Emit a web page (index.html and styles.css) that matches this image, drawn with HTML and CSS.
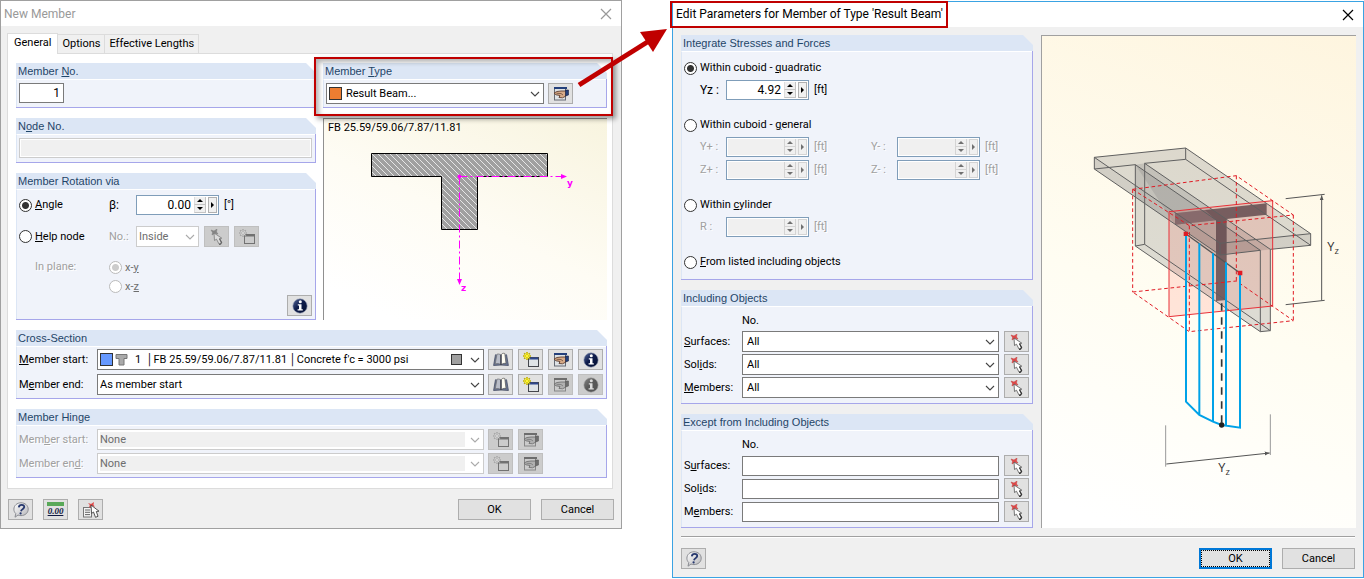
FILE: index.html
```
<!DOCTYPE html>
<html lang="en">
<head>
<meta charset="utf-8">
<title>New Member</title>
<link rel="stylesheet" href="styles.css">
</head>
<body>
<svg class="defs" aria-hidden="true">
  <defs>
    <linearGradient id="orb" x1="0" y1="0" x2="1" y2="1"><stop offset="0" stop-color="#5b6c9c"/><stop offset=".45" stop-color="#0e1c4c"/><stop offset="1" stop-color="#05102f"/></linearGradient>
    <linearGradient id="bubble" x1="0" y1="0" x2="1" y2="1"><stop offset="0" stop-color="#ffffff"/><stop offset="1" stop-color="#b4b4b8"/></linearGradient>
    <linearGradient id="pane" x1="0" y1="0" x2="1" y2="1"><stop offset="0" stop-color="#ffffff"/><stop offset="1" stop-color="#b9c4d6"/></linearGradient>
    <pattern id="hatch" width="6" height="6" patternUnits="userSpaceOnUse"><rect width="6" height="6" fill="#a0a0a0"/><path d="M-1-1L7 7M-1 5L1 7M5-1L7 1" stroke="#e6e6e6"/></pattern>
    <marker id="tip" viewBox="0 0 10 10" refX="10" refY="5" markerWidth="5" markerHeight="5" orient="auto-start-reverse"><path d="M0 1L10 5L0 9Z" fill="#555"/></marker>
  </defs>
  <symbol id="i-chevron" viewBox="0 0 10 6"><path d="M1 1L5 5L9 1" fill="none" stroke="currentColor" stroke-width="1.1"/></symbol>
  <symbol id="i-close" viewBox="0 0 12 12"><path d="M1 1L11 11M11 1L1 11" fill="none" stroke="currentColor" stroke-width="1.2"/></symbol>
  <symbol id="i-pick" viewBox="0 0 16 16"><path d="M2 1L5 2L8 0L7.500 3L9 5L5.500 4.500L3 6L3.500 3.500Z" fill="#e04848" stroke="#c04040" stroke-width=".5"/><path d="M5 4L5.500 11.500L7.500 10.200L10 15L12.500 14L10.500 9.600L12.800 9.200Z" fill="#fff" stroke="#555" stroke-width=".8"/><path d="M10.500 9.800L12.600 13.500L11.500 15.200L10 15.300" fill="none" stroke="#333" stroke-width="1.200"/></symbol>
  <symbol id="i-new" viewBox="0 0 16 16"><rect x="5.500" y="5.500" width="10" height="9" fill="#dfe3e6" stroke="#44464c"/><path d="M6 6.500H15" stroke="#2d468c" stroke-width="2"/><path d="M4 0V8M0 4H8M1.200 1.200L6.800 6.800M6.800 1.200L1.200 6.800" stroke="#b8a800" stroke-width="1.600"/><path d="M4 .8V7.200M.8 4H7.200M2 2L6 6M6 2L2 6" stroke="#fff633" stroke-width="1"/></symbol>
  <symbol id="i-edit" viewBox="0 0 16 16"><rect x="1.500" y="1.500" width="11" height="12.500" fill="#dfe3e6" stroke="#666b74"/><path d="M1 2H14" stroke="#24407c" stroke-width="2"/><path d="M1 7L4 5.500L8 5L13 5L13 10L9.500 11.800L6 11.500L7 9.500L3 8.800Z" fill="#d8ab88" stroke="#5d4032" stroke-width=".9"/><path d="M3.500 7.300L8 7.500L10 9" fill="none" stroke="#6b4b3a" stroke-width=".8"/><path d="M12.500 4L15.500 4V9L12.500 10Z" fill="#24407c" stroke="#1c2440" stroke-width=".6"/></symbol>
  <symbol id="i-book" viewBox="0 0 16 16"><path d="M2.500 2.500L.6 13.500L8 13L15.400 13.500L13.500 2.500" fill="#6b7692" stroke="#464e64" stroke-width=".8"/><path d="M8 3C6.500 1.800 5 1.800 4 2.200L2.200 12C4.500 11.200 6.500 11.500 8 13Z" fill="#b9bdc8" stroke="#666" stroke-width=".6"/><path d="M8 3C9 1.200 10.500 1 11.800 1.500L13 11.500C11 11 9.500 11.500 8 13Z" fill="#fffdf2" stroke="#555" stroke-width=".7"/><path d="M8 3V13" stroke="#33384a" stroke-width="1.200"/></symbol>
  <symbol id="i-info" viewBox="0 0 16 16"><circle cx="8" cy="8" r="7.200" fill="url(#orb)" stroke="#9aa2b8" stroke-width=".6"/><circle cx="8.300" cy="3.800" r="1.500" fill="#fff"/><path d="M5.800 6.200H9.500V11.200H10.800V12.600H5.600V11.200H7V7.600H5.800Z" fill="#fff"/></symbol>
  <symbol id="i-help" viewBox="0 0 16 16"><path d="M8 .8C12.200 .8 15.200 3.600 15.200 7.200S12.200 13.600 8 13.600C6.800 13.600 5.800 13.400 5 13L2 15.200L2.800 11.600C1.500 10.400 .9 9 .9 7.200C.9 3.600 3.900 .8 8 .8Z" fill="url(#bubble)" stroke="#8a8c92"/><path d="M5.800 5.300C6 3.600 7.200 2.900 8.700 2.900C10.400 2.900 11.400 3.800 11.200 5.200C11 6.900 8.500 7.300 8 9.200" fill="none" stroke="#26386e" stroke-width="1.800"/><circle cx="7.600" cy="11.400" r="1.100" fill="#26386e"/></symbol>
  <symbol id="i-list" viewBox="0 0 18 16"><rect x="1.500" y="5.500" width="8" height="9.500" fill="#f4f4f4" stroke="#777"/><path d="M3 8H8M3 10.300H8M3 12.600H8" stroke="#666"/><path d="M6 1L9 2L12 0L11.500 3L13 4.500L10 4.500L7 5.500L7.800 3Z" fill="#e04848"/><path d="M9 3L9.500 11.500L11.500 10L13.500 15.300L16 14.300L14.300 9.500L17 9.200Z" fill="#fff" stroke="#444" stroke-width=".9"/></symbol>
</svg>

<main class="desktop">
  <section class="dialog dialog-member" aria-label="New Member">
    <header class="titlebar muted">
      <h1 class="title">New Member</h1>
      <button class="close" aria-label="Close"><svg><use href="#i-close"/></svg></button>
    </header>

    <nav class="tabs" role="tablist">
      <button class="tab active" role="tab" aria-selected="true">General</button>
      <button class="tab" role="tab">Options</button>
      <button class="tab" role="tab">Effective Lengths</button>
    </nav>

    <div class="panel">
      <div class="columns">
        <div class="stack">
          <section class="group">
            <h2 class="group-head"><label for="member-no">Member <u>N</u>o.</label></h2>
            <div class="group-body"><input class="field number" id="member-no" value="1"></div>
          </section>
          <section class="group">
            <h2 class="group-head"><label for="node-no">N<u>o</u>de No.</label></h2>
            <div class="group-body"><input class="field wide" id="node-no" disabled></div>
          </section>
          <section class="group grow">
            <h2 class="group-head">Member Rotation via</h2>
            <div class="group-body rotation">
              <label class="radio"><input type="radio" name="rot" checked><span><u>A</u>ngle</span></label>
              <label for="beta" class="greek">β:</label>
              <div class="inline">
                <span class="spin"><input id="beta" value="0.00"><span class="updown"><button aria-label="Increase"></button><button aria-label="Decrease"></button></span><button class="more" aria-label="More"></button></span>
                <span>[°]</span>
              </div>
              <label class="radio"><input type="radio" name="rot"><span><u>H</u>elp node</span></label>
              <label for="help-no" class="off">No.:</label>
              <div class="inline">
                <span class="combo short disabled-white"><select id="help-no" disabled><option>Inside</option></select><svg class="chev"><use href="#i-chevron"/></svg></span>
                <button class="tool" disabled aria-label="Pick node"><svg><use href="#i-pick"/></svg></button>
                <button class="tool" disabled aria-label="New node"><svg><use href="#i-new"/></svg></button>
              </div>
              <span class="off plane-label">In plane:</span>
              <div class="plane">
                <label class="radio"><input type="radio" name="plane" checked disabled><span>x-<u>y</u></span></label>
                <label class="radio"><input type="radio" name="plane" disabled><span>x-<u>z</u></span></label>
              </div>
              <button class="tool info-corner" aria-label="Information"><svg><use href="#i-info"/></svg></button>
            </div>
          </section>
        </div>

        <div class="stack">
          <div class="callout-anchor">
            <section class="group">
              <h2 class="group-head"><label for="member-type">Member <u>T</u>ype</label></h2>
              <div class="group-body type-row">
                <span class="combo"><i class="swatch orange"></i><select id="member-type"><option>Result Beam...</option></select><svg class="chev"><use href="#i-chevron"/></svg></span>
                <button class="tool" aria-label="Edit member type"><svg><use href="#i-edit"/></svg></button>
              </div>
            </section>
            <div class="callout"></div>
            <svg class="arrow" viewBox="0 0 90 60" aria-hidden="true"><path d="M2 56L72 12" stroke="#c00000" stroke-width="5"/><path d="M90 0L63 3L76 23Z" fill="#c00000"/></svg>
          </div>
          <div class="preview">
            <p class="preview-name">FB 25.59/59.06/7.87/11.81</p>
            <svg class="section-drawing" viewBox="0 0 283 184" aria-label="Cross-section">
              <path d="M47.500 17.500H223.500V40.500H153.500V93.500H117.500V40.500H47.500Z" fill="url(#hatch)" stroke="#000"/>
              <path d="M135.500 40.500H237M135.500 40.500V143" fill="none" stroke="#f0f" stroke-dasharray="8 3 2 3"/>
              <path d="M237 38L243 40.500L237 43ZM133 143L135.500 149L138 143Z" fill="#f0f"/><circle cx="135.500" cy="40.500" r="2" fill="#f0f"/>
              <text x="243" y="50" class="axis">y</text><text x="137" y="155" class="axis">z</text>
            </svg>
          </div>
        </div>
      </div>

      <section class="group">
        <h2 class="group-head">Cross-Section</h2>
        <div class="group-body section-rows">
          <label for="cs-start"><u>M</u>ember start:</label>
          <span class="combo"><i class="swatch blue"></i><svg class="tee" viewBox="0 0 13 13"><path d="M1 1.500H12V5.500H9V12H4V5.500H1Z" fill="#aaa" stroke="#777"/></svg><select id="cs-start"><option>1&nbsp; │FB 25.59/59.06/7.87/11.81&nbsp;│Concrete f'c = 3000 psi</option></select><i class="swatch grey"></i><svg class="chev"><use href="#i-chevron"/></svg></span>
          <div class="tools">
            <button class="tool" aria-label="Library"><svg><use href="#i-book"/></svg></button>
            <button class="tool" aria-label="New"><svg><use href="#i-new"/></svg></button>
            <button class="tool" aria-label="Edit"><svg><use href="#i-edit"/></svg></button>
            <button class="tool" aria-label="Information"><svg><use href="#i-info"/></svg></button>
          </div>
          <label for="cs-end">M<u>e</u>mber end:</label>
          <span class="combo"><select id="cs-end"><option>As member start</option></select><svg class="chev"><use href="#i-chevron"/></svg></span>
          <div class="tools">
            <button class="tool" aria-label="Library"><svg><use href="#i-book"/></svg></button>
            <button class="tool" aria-label="New"><svg><use href="#i-new"/></svg></button>
            <button class="tool" disabled aria-label="Edit"><svg><use href="#i-edit"/></svg></button>
            <button class="tool" disabled aria-label="Information"><svg><use href="#i-info"/></svg></button>
          </div>
        </div>
      </section>

      <section class="group">
        <h2 class="group-head">Member Hinge</h2>
        <div class="group-body section-rows hinge">
          <label for="h-start" class="off">Mem<u>b</u>er start:</label>
          <span class="combo disabled"><select id="h-start" disabled><option>None</option></select><svg class="chev"><use href="#i-chevron"/></svg></span>
          <div class="tools">
            <button class="tool" disabled aria-label="New"><svg><use href="#i-new"/></svg></button>
            <button class="tool" disabled aria-label="Edit"><svg><use href="#i-edit"/></svg></button>
          </div>
          <label for="h-end" class="off">Member en<u>d</u>:</label>
          <span class="combo disabled"><select id="h-end" disabled><option>None</option></select><svg class="chev"><use href="#i-chevron"/></svg></span>
          <div class="tools">
            <button class="tool" disabled aria-label="New"><svg><use href="#i-new"/></svg></button>
            <button class="tool" disabled aria-label="Edit"><svg><use href="#i-edit"/></svg></button>
          </div>
        </div>
      </section>
    </div>

    <footer class="actions">
      <button class="tool" aria-label="Help"><svg><use href="#i-help"/></svg></button>
      <button class="tool units" aria-label="Units"><span>0.00</span></button>
      <button class="tool" aria-label="Pick from list"><svg class="wide-icon"><use href="#i-list"/></svg></button>
      <span class="spacer"></span>
      <button class="push">OK</button>
      <button class="push">Cancel</button>
    </footer>
  </section>

  <section class="dialog dialog-params" aria-label="Edit Parameters">
    <header class="titlebar">
      <h1 class="title marked">Edit Parameters for Member of Type 'Result Beam'</h1>
      <button class="close" aria-label="Close"><svg><use href="#i-close"/></svg></button>
    </header>

    <div class="params">
      <div class="stack">
        <section class="group">
          <h2 class="group-head">Integrate Stresses and Forces</h2>
          <div class="group-body regions">
            <div class="region">
              <label class="radio"><input type="radio" name="region" checked><span>Within cuboid - <u>q</u>uadratic</span></label>
              <div class="dims">
                <div class="dim"><label for="yz" class="greek">Yz :</label><span class="spin"><input id="yz" value="4.92"><span class="updown"><button aria-label="Increase"></button><button aria-label="Decrease"></button></span><button class="more" aria-label="More"></button></span><span>[ft]</span></div>
              </div>
            </div>
            <div class="region">
              <label class="radio"><input type="radio" name="region"><span>Within cuboid - <u>g</u>eneral</span></label>
              <div class="dims">
                <div class="dim off"><label for="yp">Y+ :</label><span class="spin disabled"><input id="yp" disabled><span class="updown"><button disabled aria-label="Increase"></button><button disabled aria-label="Decrease"></button></span><button class="more" disabled aria-label="More"></button></span><span>[ft]</span></div>
                <div class="dim off"><label for="ym">Y- :</label><span class="spin disabled"><input id="ym" disabled><span class="updown"><button disabled aria-label="Increase"></button><button disabled aria-label="Decrease"></button></span><button class="more" disabled aria-label="More"></button></span><span>[ft]</span></div>
                <div class="dim off"><label for="zp">Z+ :</label><span class="spin disabled"><input id="zp" disabled><span class="updown"><button disabled aria-label="Increase"></button><button disabled aria-label="Decrease"></button></span><button class="more" disabled aria-label="More"></button></span><span>[ft]</span></div>
                <div class="dim off"><label for="zm">Z- :</label><span class="spin disabled"><input id="zm" disabled><span class="updown"><button disabled aria-label="Increase"></button><button disabled aria-label="Decrease"></button></span><button class="more" disabled aria-label="More"></button></span><span>[ft]</span></div>
              </div>
            </div>
            <div class="region">
              <label class="radio"><input type="radio" name="region"><span>Within <u>c</u>ylinder</span></label>
              <div class="dims">
                <div class="dim off"><label for="rad">R :</label><span class="spin disabled"><input id="rad" disabled><span class="updown"><button disabled aria-label="Increase"></button><button disabled aria-label="Decrease"></button></span><button class="more" disabled aria-label="More"></button></span><span>[ft]</span></div>
              </div>
            </div>
            <div class="region">
              <label class="radio"><input type="radio" name="region"><span><u>F</u>rom listed including objects</span></label>
            </div>
          </div>
        </section>

        <section class="group">
          <h2 class="group-head">Including Objects</h2>
          <div class="group-body objects">
            <span class="col-title">No.</span>
            <label for="in-s"><u>S</u>urfaces:</label>
            <span class="combo"><select id="in-s"><option>All</option></select><svg class="chev"><use href="#i-chevron"/></svg></span>
            <button class="tool" aria-label="Pick surfaces"><svg><use href="#i-pick"/></svg></button>
            <label for="in-o">Sol<u>i</u>ds:</label>
            <span class="combo"><select id="in-o"><option>All</option></select><svg class="chev"><use href="#i-chevron"/></svg></span>
            <button class="tool" aria-label="Pick solids"><svg><use href="#i-pick"/></svg></button>
            <label for="in-m"><u>M</u>embers:</label>
            <span class="combo"><select id="in-m"><option>All</option></select><svg class="chev"><use href="#i-chevron"/></svg></span>
            <button class="tool" aria-label="Pick members"><svg><use href="#i-pick"/></svg></button>
          </div>
        </section>

        <section class="group">
          <h2 class="group-head">Except from Including Objects</h2>
          <div class="group-body objects">
            <span class="col-title">No.</span>
            <label for="ex-s">S<u>u</u>rfaces:</label>
            <input class="field wide" id="ex-s">
            <button class="tool" aria-label="Pick surfaces"><svg><use href="#i-pick"/></svg></button>
            <label for="ex-o">Sol<u>i</u>ds:</label>
            <input class="field wide" id="ex-o">
            <button class="tool" aria-label="Pick solids"><svg><use href="#i-pick"/></svg></button>
            <label for="ex-m">M<u>e</u>mbers:</label>
            <input class="field wide" id="ex-m">
            <button class="tool" aria-label="Pick members"><svg><use href="#i-pick"/></svg></button>
          </div>
        </section>
      </div>

      <div class="illustration">
        <svg viewBox="21 108 942 1473" aria-label="Result beam inside a cuboid">
          <g fill="#808080" fill-opacity=".27">
            <path d="M178 472L452 444L827 701V736L706 748L555 765L178 507Z"/>
            <path d="M301 494L329 490L706 748V992L676 995L301 738Z"/>
            <path d="M178 472L555 730L827 701V736L555 765L178 507Z" fill-opacity=".12"/>
            <path d="M301 494L676 751L543 763L420 674Z" fill-opacity=".25"/>
          </g>
          <path d="M402 635L713 602V918L402 950Z" fill="#ff3020" fill-opacity=".12"/>
          <path d="M420 640L695 610V644L575 657V900L543 903V661L420 674Z" fill="#5d4348" fill-opacity=".8"/>
          <path d="M420 640L510 630L543 661L420 674Z" fill="#c09898" fill-opacity=".3"/>
          <g fill="none" stroke="#606060" stroke-width="3">
            <path d="M178 472L452 444V478L329 490V733L301 738V494L178 507Z"/>
            <path d="M555 730L827 701V736L706 748V992L676 995V751L555 765Z"/>
            <path d="M178 472L555 730M178 507L555 765M452 444L827 701M452 478L827 736M301 494L676 751M329 490L706 748M301 738L676 995M329 733L706 992"/>
          </g>
          <path d="M402 635L713 602V918L402 950Z" fill="none" stroke="#e83038" stroke-width="3"/>
          <path d="M293 568L604 527L775 645L463 677ZM293 876L604 843L775 962L463 995ZM293 568V876M463 677V995M604 527V843M775 645V962" fill="none" stroke="#e01b24" stroke-width="3" stroke-dasharray="11 8"/>
          <path d="M453 702L615 819" stroke="#555" stroke-width="4"/>
          <path d="M453 702V1205L493 1245L534 1265L560 1275L615 1283V819M493 730V1245M534 760V1265M573 787V1277" fill="none" stroke="#00a2e8" stroke-width="6"/>
          <path d="M560 910V1275" stroke="#333" stroke-width="5" stroke-dasharray="22 20"/>
          <circle cx="560" cy="1275" r="8" fill="#222"/>
          <path d="M446 695H459V708H446ZM608 812H622V826H608Z" fill="#e01b24"/>
          <g fill="none" stroke="#555" stroke-width="3">
            <path d="M752 596L869 583M752 914L869 901"/>
            <path d="M392 1276V1400M706 1243V1365" stroke="#999"/>
            <path d="M860 586V901M394 1392L704 1359" marker-start="url(#tip)" marker-end="url(#tip)"/>
          </g>
          <text x="877" y="752" class="dim-label">Y<tspan class="sub" dy="9">z</tspan></text>
          <text x="550" y="1415" class="dim-label">Y<tspan class="sub" dy="9">z</tspan></text>
        </svg>
      </div>
    </div>

    <footer class="actions ruled">
      <button class="tool" aria-label="Help"><svg><use href="#i-help"/></svg></button>
      <span class="spacer"></span>
      <button class="push default">OK</button>
      <button class="push">Cancel</button>
    </footer>
  </section>
</main>
</body>
</html>
```
FILE: styles.css
```
* { box-sizing: border-box; }
body {
  margin: 0;
  background: #fff;
  color: #000;
  font: 11px/16px Roboto, "Liberation Sans", sans-serif;
}
button, input, select { font: inherit; color: inherit; margin: 0; }
u { text-underline-offset: 1px; }
.defs { position: absolute; width: 0; height: 0; }

.desktop { display: grid; grid-template-columns: 622fr 692fr; gap: 50px; align-items: start; }
.dialog { background: #f0f0f0; border: 1px solid #a0a0a0; min-width: 0; }
.dialog-params { border-color: #3aa3e3; margin-top: 1px; }

/* Title bars */
.titlebar { display: flex; align-items: center; justify-content: space-between; height: 25px; background: #fff; padding: 0 9px 0 3px; }
.titlebar.muted { color: #999; }
.title { margin: 0; font-size: 12px; line-height: 16px; font-weight: 400; }
.title.marked { border: 2px solid #c00000; padding: 4px 3px 4px 4px; margin-left: -6px; line-height: 15px; }
.close { display: flex; padding: 0; border: 0; background: none; }
.close svg { width: 12px; height: 12px; }

/* Tabs */
.tabs { display: flex; align-items: flex-end; padding: 7px 0 0 6px; }
.tab { height: 19px; padding: 0 4px; border: 1px solid #dcdcdc; border-left: 0; border-bottom: 0; background: #f0f0f0; line-height: 18px; }
.tab.active { position: relative; z-index: 1; height: 21px; margin-bottom: -1px; padding: 0 6px 2px; border-left: 1px solid #dcdcdc; background: #fff; }
.panel { display: flex; flex-direction: column; gap: 10px; margin: 0 8px 0 6px; padding: 9px 5px 10px 8px; border: 1px solid #dcdcdc; background: #fff; }
.columns { display: grid; grid-template-columns: 300fr 284fr; gap: 7px; }
.stack { display: flex; flex-direction: column; gap: 10px; min-width: 0; }

/* Group boxes */
.group { background: linear-gradient(#a6a6ea, #a6a6ea) right 0 top 10px / 1px 100% no-repeat; border-bottom: 1px solid #a6a6ea; min-width: 0; display: flex; flex-direction: column; }
.group.grow { flex: 1; }
.group-head { margin: 0; height: 16px; padding-left: 2px; background: #dce6f5; color: #1f4568; font: 11px/16px "Liberation Sans", Arial, sans-serif; clip-path: polygon(0 0, calc(100% - 10px) 0, 100% 10px, 100% 100%, 0 100%); }
.group-body { flex: 1; margin-right: 1px; padding: 3px 3px 4px 2px; border-left: 1px solid #dce6f5; border-top: 1px solid #fff; background: #f0f3fa; }
.group-body > .field { display: block; }

/* Controls */
.field { height: 20px; padding: 0 3px; border: 1px solid #7a7a7a; border-radius: 0; background: #fff; min-width: 0; }
.field.number { width: 45px; text-align: right; font-size: 12px; }
.field.wide { width: 100%; }
.field:disabled { border-color: #ccc; background: #f0f0f0; box-shadow: inset 0 0 0 1px #fff; }
.combo { display: flex; align-items: center; height: 21px; border: 1px solid #7a7a7a; background: #fff; padding: 0 3px 0 2px; gap: 4px; min-width: 0; flex: 1; }
.combo select { appearance: none; flex: 1; min-width: 0; height: 19px; padding: 0; border: 0; background: none; opacity: 1; }
.combo .chev { width: 10px; height: 6px; flex: none; color: #444; }
.combo.short { flex: none; width: 63px; }
.combo.disabled, .combo.disabled-white { border-color: #ccc; color: #6d6d6d; }
.combo.disabled select { height: 15px; background: #f0f0f0; color: #6d6d6d; }
.combo.disabled .chev, .combo.disabled-white .chev { color: #aaa; }
.combo.disabled { gap: 5px; }
.swatch { width: 13px; height: 13px; border: 1px solid #333; flex: none; }
.swatch.orange { background: #ed7d31; }
.swatch.blue { background: #6699ff; }
.swatch.grey { width: 11px; height: 11px; background: #a0a0a0; margin-right: 4px; }
.tee { width: 13px; height: 13px; flex: none; margin-left: -2px; margin-right: 3px; }
.off { color: #a0a0a0; text-shadow: 1px 1px #fff; }
.greek { font-size: 12px; }

.spin { display: flex; align-items: center; width: 83px; height: 20px; padding: 1px; border: 1px solid #7f9db9; background: #fff; }
.spin input { flex: 1; min-width: 0; height: 16px; padding: 0 3px 0 0; border: 0; background: none; text-align: right; font-size: 12px; }
.updown { display: flex; flex-direction: column; width: 12px; height: 16px; }
.updown button { display: flex; justify-content: center; align-items: center; flex: 1; padding: 0; border: 1px solid #c4c4c4; border-top: 0; border-left-color: #ddd; background: #f0f0f0; min-height: 0; }
.updown button::before { content: ""; border: 3px solid transparent; border-top: 0; border-bottom-color: #000; }
.updown button + button::before { border-bottom: 0; border-top: 3px solid #000; }
.more { display: flex; justify-content: center; align-items: center; width: 9px; height: 16px; margin-left: 2px; padding: 0; border: 1px solid #b0b0b0; background: #f0f0f0; }
.more::before { content: ""; border: 3px solid transparent; border-right: 0; border-left-color: #000; }
.spin.disabled { background: #f0f0f0; box-shadow: inset 0 0 0 1px #fff; }
.spin.disabled .updown button::before { border-bottom-color: #707070; }
.spin.disabled .updown button + button::before { border-top-color: #707070; }
.spin.disabled .more::before { border-left-color: #707070; }
.spin.disabled button { border-color: #d4d4d4; }

.radio { display: inline-flex; align-items: center; gap: 3px; height: 16px; white-space: nowrap; }
.radio input { appearance: none; flex: none; width: 13px; height: 13px; border: 1px solid #333; border-radius: 50%; background: #fff; }
.radio input:checked { background: radial-gradient(circle, #333 0 3px, #fff 4px); }
.radio input:disabled { border-color: #bbb; }
.radio input:checked:disabled { background: radial-gradient(circle, #ccc 0 3px, #fff 4px); }
.radio input:disabled + span { color: #6d6d6d; }

.tool { display: flex; flex: none; align-items: center; justify-content: center; width: 25px; height: 21px; padding: 0; border: 1px solid #adadad; background: #e1e1e1; }
.tool svg { width: 16px; height: 16px; }
.tool svg.wide-icon { width: 18px; }
.tool:disabled { border-color: #bfbfbf; background: #ccc; }
.tool:disabled svg { filter: grayscale(1) contrast(.5) brightness(1.15); }
.units span { width: 17px; height: 15px; border-top: 4px solid #58a858; font: italic 700 9px/11px "Liberation Serif", serif; color: #101840; text-decoration: underline; }
.push { width: 73px; height: 21px; padding: 0; border: 1px solid #adadad; background: #e1e1e1; font-size: 11px; line-height: 19px; }
.push.default { border: 2px solid #0078d7; outline: 1px dotted #000; outline-offset: -3px; line-height: 17px; }

/* Member rotation grid */
.rotation { display: grid; grid-template-columns: 90px 27px 1fr; align-items: center; }
.group-body.rotation { padding-top: 5px; padding-bottom: 2px; row-gap: 11px; grid-template-rows: 20px 21px 37px; align-content: start; position: relative; }
.inline { display: flex; align-items: center; gap: 5px; }
.plane-label { padding-left: 16px; align-self: start; padding-top: 1px; }
.plane { grid-column: 2 / 4; display: flex; flex-direction: column; gap: 3px; padding-top: 1px; }
.info-corner { position: absolute; right: 3px; bottom: 3px; }
.type-row { display: flex; gap: 4px; }
.group-body.type-row { padding-right: 33px; padding-bottom: 3px; }

/* Highlight around the member type box */
.callout-anchor { position: relative; }
.callout { position: absolute; inset: -6px -6px -8px -9px; border: 2px solid #c00000; box-shadow: 3px 3px 5px rgba(0, 0, 0, .4), inset 3px 3px 5px rgba(0, 0, 0, .3); pointer-events: none; z-index: 2; }
.arrow { position: absolute; z-index: 3; right: -60px; top: -34px; width: 90px; height: 60px; pointer-events: none; }

.preview { flex: 1; border: 1px solid #909090; border-width: 1px 0 0 1px; background: linear-gradient(25deg, #fff 10%, #fefcf4 50%, #f8f4df); }
.preview-name { margin: 0; padding: 1px 4px 0; }
.section-drawing { display: block; width: 100%; }
.axis { font: 700 9px "DejaVu Sans", sans-serif; fill: #f0f; }

.section-rows { display: grid; grid-template-columns: 78px minmax(0, 1fr) 115px; row-gap: 4px; align-items: center; }
.group-body.section-rows { padding-top: 2px; padding-bottom: 3px; }
.group-body.hinge { padding-top: 3px; row-gap: 3px; }
.tools { display: flex; gap: 5px; }
.section-rows .combo { margin-right: 4px; }

.actions { display: flex; gap: 10px; padding: 10px 7px 8px; }
.spacer { flex: 1; }

/* Parameters dialog */
.params { display: grid; grid-template-columns: 352fr 315fr; gap: 8px; padding: 8px 7px 8px 8px; }
.regions { display: flex; flex-direction: column; gap: 17px; }
.group-body.regions { padding-top: 8px; padding-bottom: 9px; }
.region { display: flex; flex-direction: column; align-items: flex-start; gap: 4px; }
.dims { display: grid; grid-template-columns: 171px 1fr; row-gap: 3px; padding-left: 16px; }
.dim { display: grid; grid-template-columns: 26px 83px auto; align-items: center; }
.dim > span:last-child { padding-left: 5px; }
.objects { display: grid; grid-template-columns: 58px minmax(0, 1fr) 25px; row-gap: 2px; align-items: center; }
.objects .tool { grid-column: 3; }
.objects .combo, .objects .field { grid-column: 2; margin-right: 5px; width: auto; }
.objects .combo { padding-left: 4px; }
.col-title { grid-column: 2 / 4; line-height: 17px; }
.group-body.objects { padding-top: 5px; padding-bottom: 5px; }
.illustration { border: 1px solid #a0a0a0; border-width: 1px 0 0 1px; background: linear-gradient(20deg, #fff 5%, #fffdf2 45%, #fef5df); }
.illustration svg { display: block; width: 100%; }
.dim-label { font: 38px "Open Sans", sans-serif; fill: #333; }
.sub { font-size: 28px; }
.actions.ruled { margin: 0 8px; padding: 11px 0 8px; border-top: 1px solid #a0a0a0; box-shadow: inset 0 1px #fff; }
```
